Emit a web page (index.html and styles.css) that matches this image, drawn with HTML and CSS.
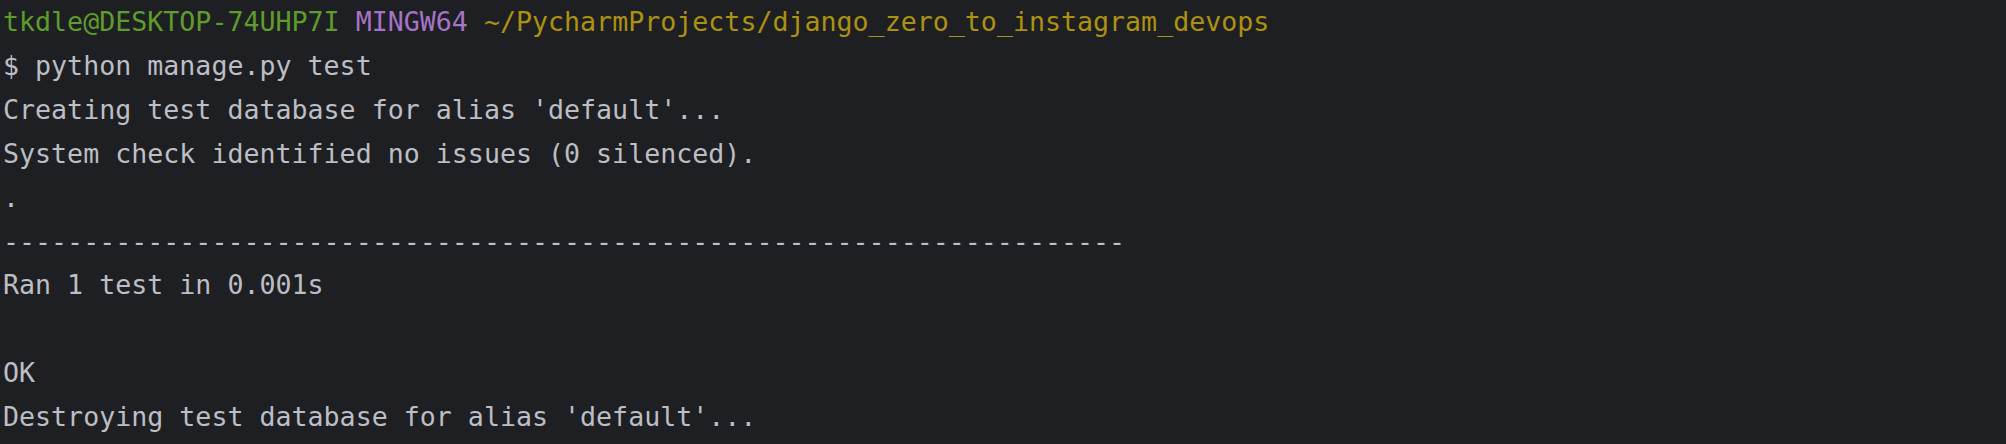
FILE: index.html
```html
<!DOCTYPE html>
<html lang="en">
<head>
  <meta charset="UTF-8" />
  <title>Terminal</title>
  <link rel="stylesheet" href="styles.css">
</head>
<body>
  <div class="terminal">
    <div class="line"><span class="user">tkdle@DESKTOP-74UHP7I</span> <span class="host">MINGW64</span> <span class="path">~/PycharmProjects/django_zero_to_instagram_devops</span></div>
    <div class="line">$ python manage.py test</div>
    <div class="line">Creating test database for alias 'default'...</div>
    <div class="line">System check identified no issues (0 silenced).</div>
    <div class="line">.</div>
    <div class="line">----------------------------------------------------------------------</div>
    <div class="line">Ran 1 test in 0.001s</div>
    <div class="line">&nbsp;</div>
    <div class="line">OK</div>
    <div class="line">Destroying test database for alias 'default'...</div>
  </div>
</body>
</html>
```

FILE: styles.css
```css
body {
  margin: 0;
  padding: 0;
  background-color: #1e1f22;
  color: #bcbec4;
  font-family: 'DejaVu Sans Mono', 'Liberation Mono', monospace;
}
.terminal {
  padding: 0 3px;
  font-size: 26.64px;
  line-height: 43.9px;
}
.line {
  white-space: pre;
}
.user {
  color: #5e9c2c;
}
.host {
  color: #a673c9;
}
.path {
  color: #ad9112;
}
```
